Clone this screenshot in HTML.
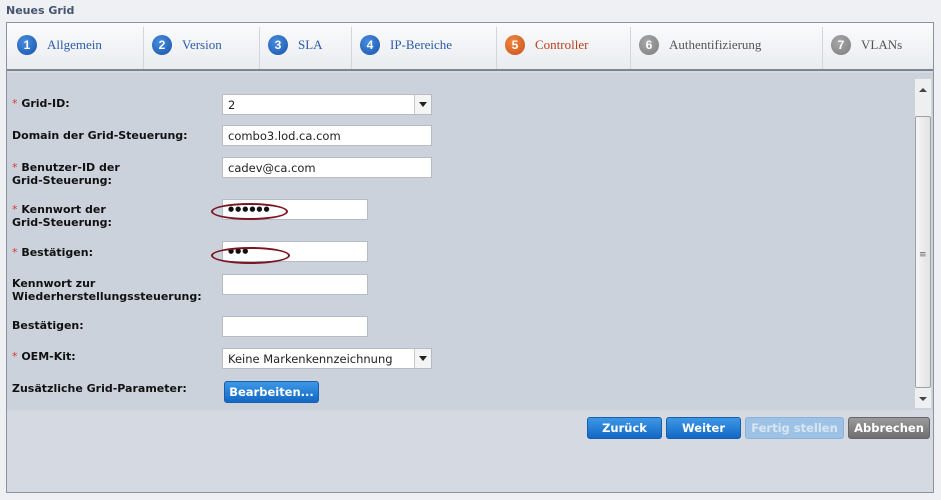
<!DOCTYPE html>
<html><head><meta charset="utf-8"><style>
*{margin:0;padding:0;box-sizing:border-box}
body{width:941px;height:500px;background:#eef0f3;font-family:"DejaVu Sans","Liberation Sans",sans-serif;position:relative;overflow:hidden}
.a{position:absolute}
.title{left:6px;top:4px;font-size:11px;font-weight:bold;color:#44536e}
.panel{left:6px;top:22px;width:928px;height:471px;border:1px solid #8c939c;background:#d5dae2}
.tabs{left:7px;top:23px;width:926px;height:48px;background:linear-gradient(#fbfbfc,#e9ecf0);border-bottom:2px solid #7d848d}
.sep{top:27px;width:1px;height:42px;background:#d3d6da}
.c{width:20px;height:20px;border-radius:50%;color:#fff;font:bold 12px "Liberation Sans",sans-serif;text-align:center;line-height:20px;top:35px}
.b{background:radial-gradient(circle at 40% 35%,#4a8ee0,#1452a8)}
.o{background:radial-gradient(circle at 40% 35%,#f08840,#c8501a)}
.g{background:radial-gradient(circle at 40% 35%,#a8a8a8,#7c7c7c)}
.tt{top:37px;font:13px "Liberation Serif",serif;color:#2a5ca8}
.content{left:7px;top:73px;width:926px;height:337px;background:#cbd2dc}
.lbl{left:12px;font-size:11px;font-weight:bold;color:#111;line-height:13px}
.lbl i{color:#d33;font-style:normal;font-weight:normal}
.in{background:#fff;border:1px solid #b5bcc6;font-size:11.5px;color:#222;padding-left:5px;line-height:20px}
.w{left:222px;width:210px;height:21px}
.s{left:222px;width:146px;height:21px}
.dd{position:absolute;right:0;top:0;width:17px;height:19px;border-left:1px solid #c8c8c8;background:#f4f4f4}
.dd:after{content:"";position:absolute;left:4px;top:7px;border:4px solid transparent;border-top:5px solid #222}
.ell{border:2px solid #7a1622;border-radius:50%}
.dots{font-size:7px;letter-spacing:1px;line-height:19px;color:#111}
.btn{top:417px;height:22px;border-radius:3px;color:#fff;font-size:11.5px;font-weight:bold;text-align:center;line-height:21px}
.bb{background:linear-gradient(#3d97e6,#1268c4);border:1px solid #1a5ea8}
</style></head><body>
<div class="a title">Neues Grid</div>
<div class="a panel"></div>
<div class="a tabs"></div>
<div class="a sep" style="left:143px"></div><div class="a sep" style="left:259px"></div><div class="a sep" style="left:351px"></div><div class="a sep" style="left:496px"></div><div class="a sep" style="left:630px"></div><div class="a sep" style="left:822px"></div>
<div class="a c b" style="left:17px">1</div><div class="a tt" style="left:47px">Allgemein</div>
<div class="a c b" style="left:152px">2</div><div class="a tt" style="left:182px">Version</div>
<div class="a c b" style="left:268px">3</div><div class="a tt" style="left:298px">SLA</div>
<div class="a c b" style="left:360px">4</div><div class="a tt" style="left:390px">IP-Bereiche</div>
<div class="a c o" style="left:505px">5</div><div class="a tt" style="left:535px;color:#b8401e">Controller</div>
<div class="a c g" style="left:639px">6</div><div class="a tt" style="left:669px;color:#555">Authentifizierung</div>
<div class="a c g" style="left:831px">7</div><div class="a tt" style="left:861px;color:#555">VLANs</div>
<div class="a content"></div>
<div class="a" style="left:914px;top:78px;width:18px;height:331px;background:#eeeff1;border:1px solid #d0d3d8"></div>
<div class="a" style="left:915px;top:116px;width:16px;height:272px;background:linear-gradient(90deg,#f6f6f6,#e2e2e2);border:1px solid #9aa0a8;border-radius:2px"></div>
<div class="a" style="left:919px;top:84px;border:4px solid transparent;border-bottom:4px solid #444;width:0;height:0"></div>
<div class="a" style="left:919px;top:397px;border:4px solid transparent;border-top:4px solid #444;width:0;height:0"></div>
<div class="a" style="left:919px;top:250px;font-size:9px;color:#666">≡</div>

<div class="a lbl" style="top:97px"><i>*</i> Grid-ID:</div>
<div class="a in w" style="top:94px">2<div class="dd"></div></div>
<div class="a lbl" style="top:129px">Domain der Grid-Steuerung:</div>
<div class="a in w" style="top:125px">combo3.lod.ca.com</div>
<div class="a lbl" style="top:161px"><i>*</i> Benutzer-ID der<br>Grid-Steuerung:</div>
<div class="a in w" style="top:157px">cadev@ca.com</div>
<div class="a lbl" style="top:203px"><i>*</i> Kennwort der<br>Grid-Steuerung:</div>
<div class="a in s dots" style="top:199px">●●●●●●</div>
<div class="a ell" style="left:211px;top:203px;width:77px;height:17px"></div>
<div class="a lbl" style="top:246px"><i>*</i> Bestätigen:</div>
<div class="a in s dots" style="top:241px">●●●</div>
<div class="a ell" style="left:211px;top:247px;width:79px;height:17px"></div>
<div class="a lbl" style="top:277px">Kennwort zur<br>Wiederherstellungssteuerung:</div>
<div class="a in s" style="top:274px"></div>
<div class="a lbl" style="top:319px">Bestätigen:</div>
<div class="a in s" style="top:316px"></div>
<div class="a lbl" style="top:350px"><i>*</i> OEM-Kit:</div>
<div class="a in w" style="top:348px">Keine Markenkennzeichnung<div class="dd"></div></div>
<div class="a lbl" style="top:382px">Zusätzliche Grid-Parameter:</div>
<div class="a btn bb" style="left:224px;top:381px;width:95px">Bearbeiten...</div>

<div class="a btn bb" style="left:587px;width:75px">Zurück</div>
<div class="a btn bb" style="left:666px;width:75px">Weiter</div>
<div class="a btn" style="left:745px;width:99px;background:#9dc2e6;color:#d8e6f3;border:1px solid #8ab3dc">Fertig stellen</div>
<div class="a btn" style="left:848px;width:82px;background:linear-gradient(#9a9a9a,#6e6e6e);border:1px solid #666">Abbrechen</div>
</body></html>
